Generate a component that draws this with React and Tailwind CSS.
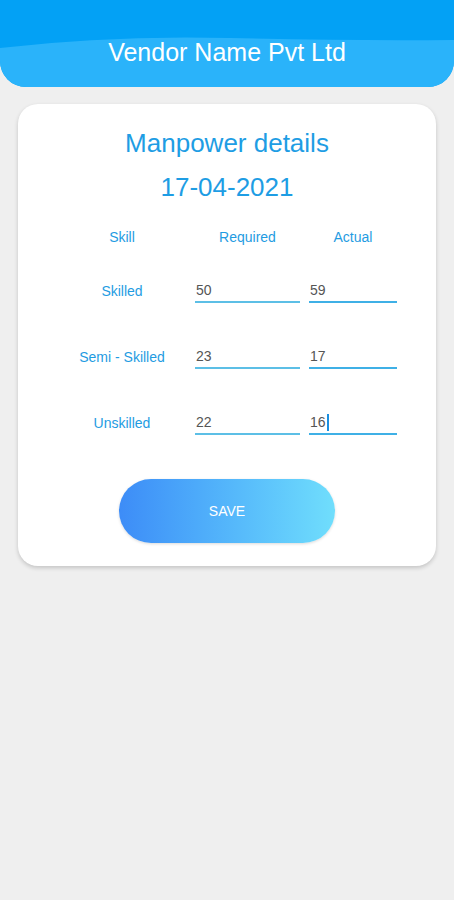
import React from 'react'

const rows = [
  { skill: 'Skilled', required: '50', actual: '59' },
  { skill: 'Semi - Skilled', required: '23', actual: '17' },
  { skill: 'Unskilled', required: '22', actual: '16', focus: true },
]

function Header() {
  return (
    <div className="relative h-[87px] overflow-hidden rounded-b-[26px] bg-[#03a1f5]">
      {/* lighter wave in the lower half */}
      <svg className="absolute inset-0" width="454" height="87" viewBox="0 0 454 87">
        <path d="M0 48 Q 110 35 230 38 T 454 40 L454 87 L0 87 Z" fill="#2ab3fa" />
      </svg>
      <div className="relative flex h-full items-center justify-center pt-[16px]">
        <h1 className="text-[25px] leading-[32px] text-white">Vendor Name Pvt Ltd</h1>
      </div>
    </div>
  )
}

function Row({ skill, required, actual, focus }) {
  return (
    <div className="flex h-[24px] items-center pl-[40px]">
      <div className="w-[128px] text-center text-[14px] text-[#1f9ce2]">{skill}</div>
      <div className="ml-[9px] flex h-[24px] w-[105px] items-center border-b-2 border-[#5cbfe6] pl-px text-[14px] text-[#555]">
        {required}
      </div>
      <div className="ml-[9px] flex h-[24px] w-[88px] items-center border-b-2 border-[#3fb0e6] pl-px text-[14px] text-[#555]">
        {actual}
        {focus && <span className="ml-px inline-block h-[17px] w-[2px] bg-[#1a8fe0]" />}
      </div>
    </div>
  )
}

export default function App() {
  return (
    <div className="min-h-[900px] bg-[#efefef] font-['Liberation_Sans',Arial,sans-serif]">
      <Header />

      {/* Card */}
      <div className="mx-[18px] mt-[17px] rounded-[20px] bg-white pt-[23px] pb-[23px] shadow-[0_2px_4px_rgba(0,0,0,0.18)]">
        <h2 className="text-center text-[26px] leading-[32px] text-[#1e9de4]">Manpower details</h2>
        <div className="mt-[12px] text-center text-[26px] leading-[32px] text-[#1e9de4]">17-04-2021</div>

        <div className="mt-[24px] flex h-[20px] items-center pl-[40px] text-[14px] text-[#1f9ce2]">
          <div className="w-[128px] text-center">Skill</div>
          <div className="ml-[9px] w-[105px] text-center">Required</div>
          <div className="ml-[9px] w-[88px] text-center">Actual</div>
        </div>

        <div className="mt-[32px] flex flex-col gap-[42px]">
          {rows.map((r) => (
            <Row key={r.skill} {...r} />
          ))}
        </div>

        <div className="mt-[44px] flex justify-center">
          <button className="h-[64px] w-[216px] rounded-full bg-gradient-to-r from-[#3d8cf7] to-[#70defc] text-[14px] text-white shadow-[0_1px_3px_rgba(0,0,0,0.15)]">
            SAVE
          </button>
        </div>
      </div>
    </div>
  )
}
